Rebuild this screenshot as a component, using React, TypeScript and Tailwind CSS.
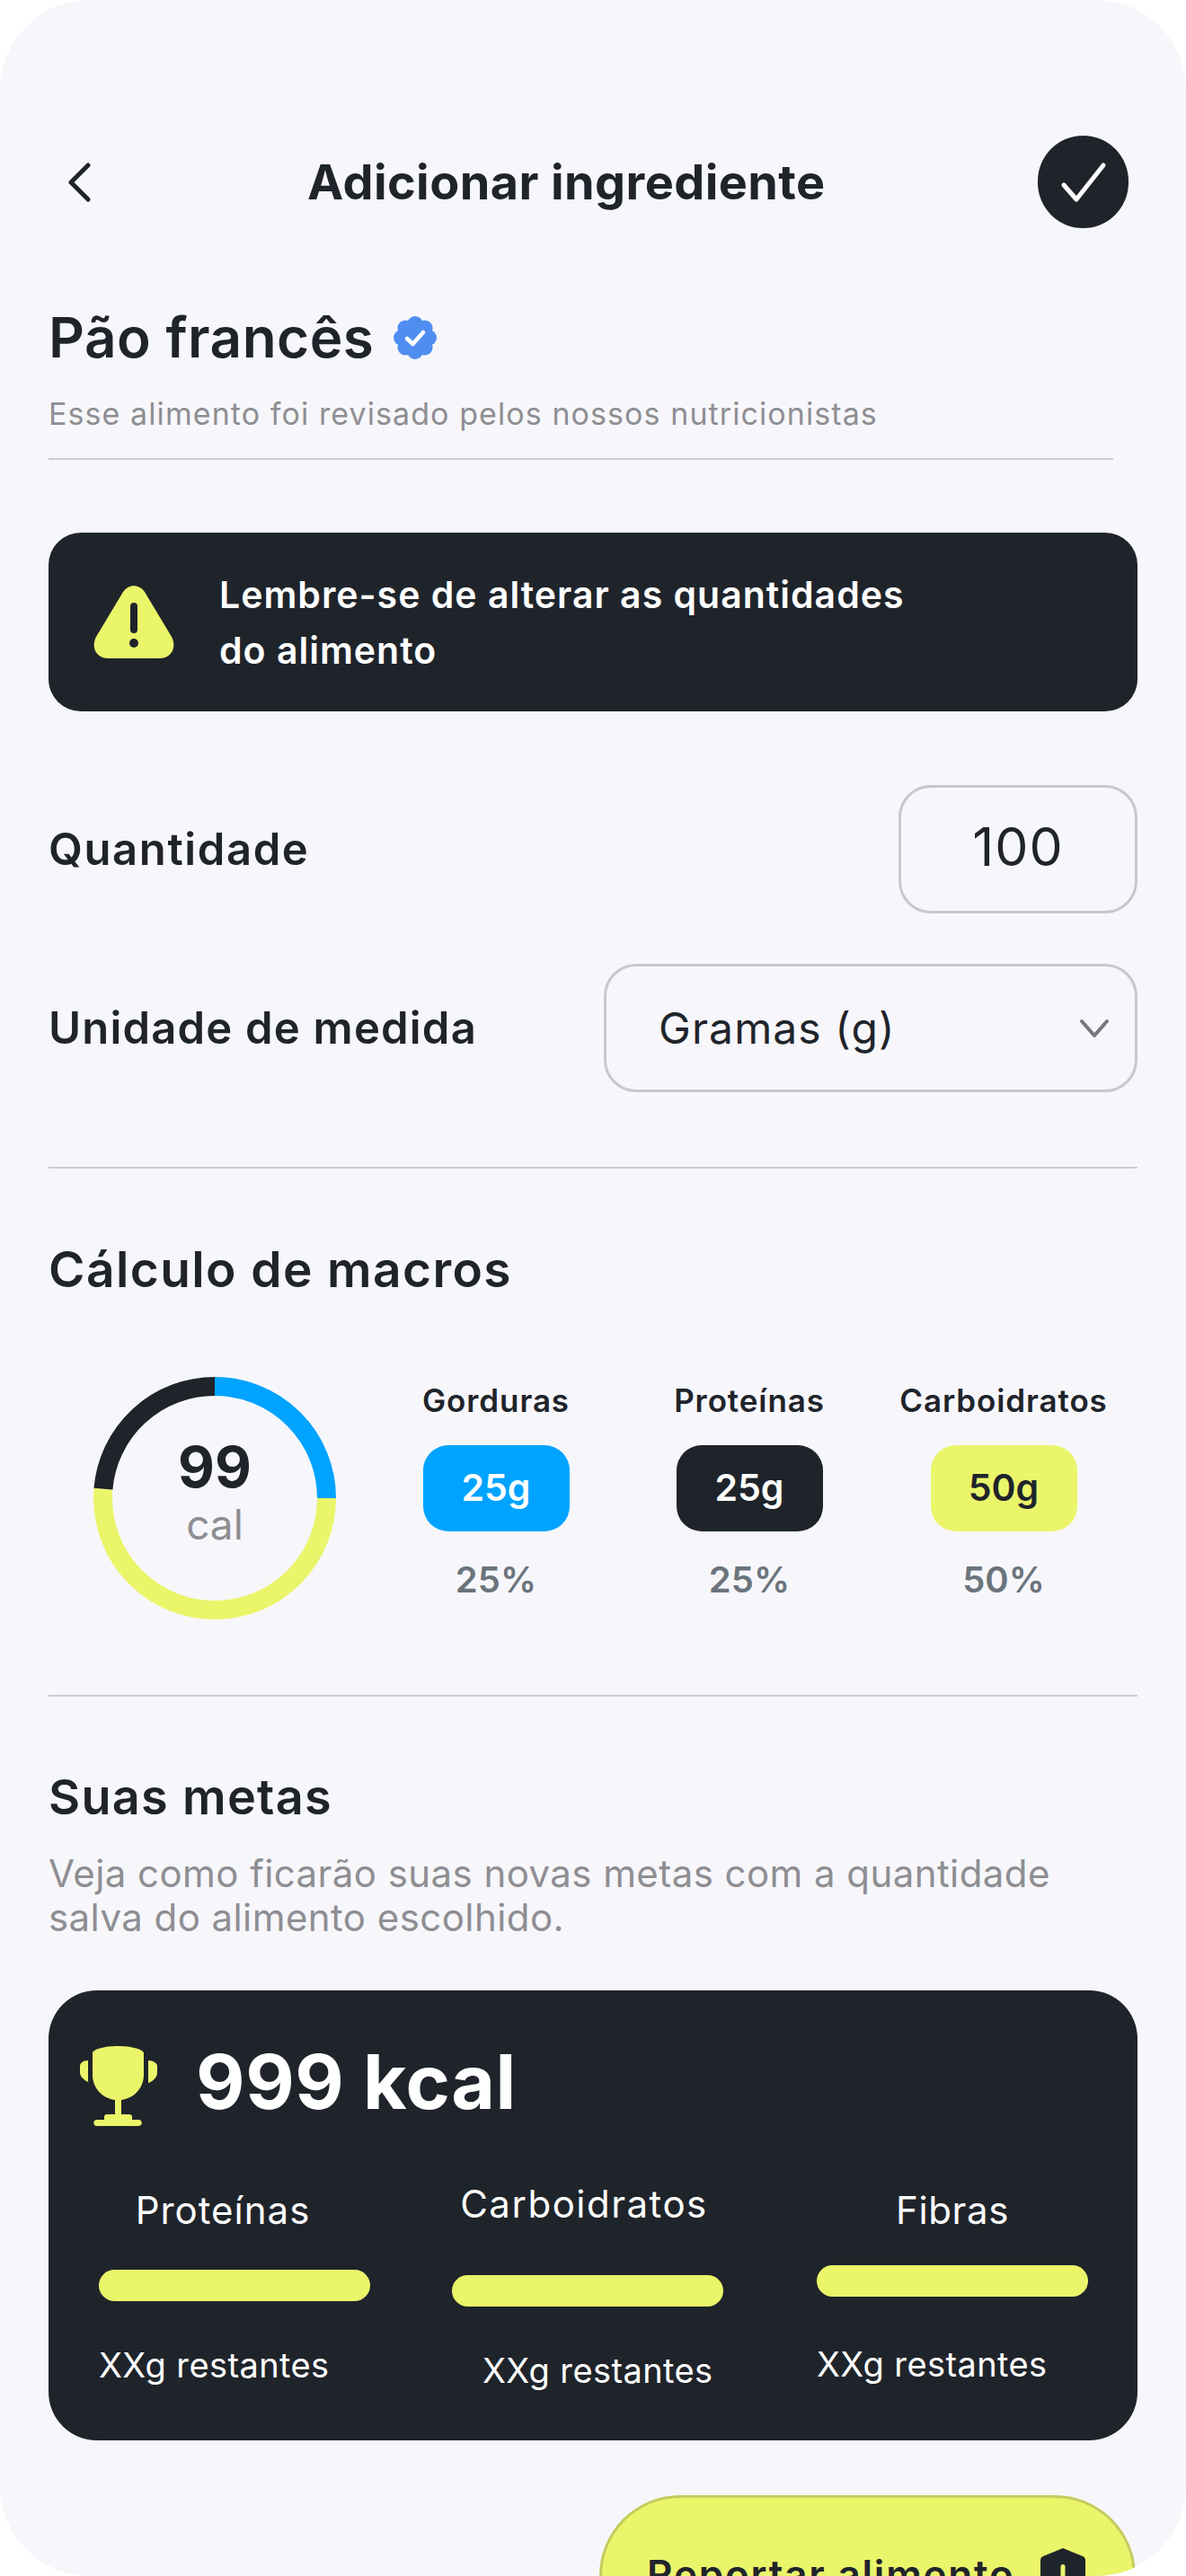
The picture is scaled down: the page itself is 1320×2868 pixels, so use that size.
const font = { fontFamily: "Inter, 'Noto Sans', sans-serif" };

const Divider = ({ className }: { className: string }) => (
  <div className={`h-[2px] bg-[#cbcbd0] ${className}`} />
);

const MacroCol = ({
  label,
  grams,
  percent,
  badge,
  className,
}: {
  label: string;
  grams: string;
  percent: string;
  badge: string;
  className: string;
}) => (
  <div className={`flex w-[232px] flex-col items-center ${className}`}>
    <span className="h-[54px] text-[35px] leading-[54px] font-semibold tracking-[0.9px] whitespace-nowrap text-[#1f242b]">
      {label}
    </span>
    <span
      className={`mt-[23px] flex h-[96px] w-[163px] items-center justify-center rounded-[28px] text-[41px] font-semibold ${badge}`}
    >
      {grams}
    </span>
    <span className="mt-[30px] text-[40px] leading-[48px] font-semibold text-[#6b747c]">
      {percent}
    </span>
  </div>
);

const MetaCol = ({
  label,
  labelClass,
  barClass,
  restClass,
  className,
}: {
  label: string;
  labelClass: string;
  barClass: string;
  restClass: string;
  className: string;
}) => (
  <div className={`flex w-[302px] flex-col ${className}`}>
    <span className={`text-center text-[42px] leading-[50px] text-white ${labelClass}`}>
      {label}
    </span>
    <div className={`h-[35px] w-[302px] rounded-full bg-[#ebf56a] ${barClass}`} />
    <span className={`text-[38px] leading-[46px] tracking-[0.4px] whitespace-nowrap text-white ${restClass}`}>
      XXg restantes
    </span>
  </div>
);

const App = () => {
  const r = 124.5;
  const c = 2 * Math.PI * r;
  return (
    <div className="h-[2868px] w-[1320px] bg-white" style={font}>
      <div className="h-[2868px] w-[1320px] overflow-hidden rounded-[100px] bg-[#f7f7fb] px-[54px] pt-[151px]">
        <div className="flex h-[103px] items-center">
          <svg className="ml-[20px] h-[44px] w-[28px]" viewBox="0 0 28 44" fill="none">
            <path d="M24 3 5 22l19 19" stroke="#1f242b" strokeWidth="5" strokeLinecap="round" strokeLinejoin="round" />
          </svg>
          <h1 className="ml-[240px] text-[54px] leading-[70px] font-bold tracking-[0.4px] whitespace-nowrap text-[#1f242b]">
            Adicionar ingrediente
          </h1>
          <div className="mr-[10px] ml-auto flex h-[103px] w-[101px] items-center justify-center rounded-full bg-[#1f242b]">
            <svg className="h-[50px] w-[56px]" viewBox="0 0 56 50" fill="none">
              <path d="M6 28 20 44 50 6" stroke="#fff" strokeWidth="5" strokeLinecap="round" strokeLinejoin="round" />
            </svg>
          </div>
        </div>

        <div className="mt-[87px] flex h-[70px] items-center">
          <h2 className="text-[62px] leading-[70px] font-semibold tracking-[0.5px] text-[#1f242b]">
            Pão francês
          </h2>
          <svg className="ml-[22px] h-[48px] w-[48px]" viewBox="0 0 48 48">
            <g fill="#4f8ef0">
              <circle cx="24" cy="24" r="18" />
              <circle cx="24" cy="9" r="9" />
              <circle cx="24" cy="39" r="9" />
              <circle cx="9" cy="24" r="9" />
              <circle cx="39" cy="24" r="9" />
              <circle cx="13.4" cy="13.4" r="9" />
              <circle cx="34.6" cy="13.4" r="9" />
              <circle cx="13.4" cy="34.6" r="9" />
              <circle cx="34.6" cy="34.6" r="9" />
            </g>
            <path d="M15 25l6.5 6L33 18" fill="none" stroke="#fff" strokeWidth="4.5" strokeLinecap="round" strokeLinejoin="round" />
          </svg>
        </div>
        <p className="mt-[30px] text-[34px] leading-[40px] tracking-[1.08px] text-[#8e8e93]">
          Esse alimento foi revisado pelos nossos nutricionistas
        </p>
        <Divider className="mt-[29px] w-[1185px]" />

        <div className="mt-[81px] flex h-[199px] items-center rounded-[36px] bg-[#1f242b] pl-[49px]">
          <svg className="h-[83px] w-[92px]" viewBox="0 0 92 83">
            <path
              d="M34 8C40-1 52-1 58 8L88 58C94 70 88 82 74 82H18C4 82-2 70 4 58Z"
              fill="#ebf56a"
            />
            <rect x="42" y="20" width="8" height="34" rx="4" fill="#1f242b" />
            <circle cx="46" cy="65" r="5" fill="#1f242b" />
          </svg>
          <p className="ml-[49px] text-[41px] leading-[62px] font-semibold tracking-[1px] text-white">
            Lembre-se de alterar as quantidades
            <br />
            do alimento
          </p>
        </div>

        <div className="mt-[82px] flex h-[143px] items-center justify-between">
          <span className="text-[49px] font-semibold tracking-[1.6px] text-[#1f242b]">Quantidade</span>
          <div className="flex h-[143px] w-[266px] items-center justify-center rounded-[36px] border-[3px] border-[#c8c8cc] pb-[4px] text-[59px] tracking-[1px] text-[#1f242b]">
            100
          </div>
        </div>
        <div className="mt-[56px] flex h-[143px] items-center justify-between">
          <span className="text-[49px] font-semibold tracking-[1.2px] text-[#1f242b]">Unidade de medida</span>
          <div className="flex h-[143px] w-[594px] items-center justify-between rounded-[36px] border-[3px] border-[#c8c8cc] pr-[28px] pl-[58px] text-[48px] tracking-[1.1px] text-[#1f242b]">
            Gramas (g)
            <svg className="h-[24px] w-[34px]" viewBox="0 0 34 24" fill="none">
              <path d="M3 4 17 20 31 4" stroke="#77777c" strokeWidth="4" strokeLinecap="round" strokeLinejoin="round" />
            </svg>
          </div>
        </div>
        <Divider className="mt-[83px] w-[1212px]" />

        <h3 className="mt-[77px] text-[55px] leading-[70px] font-semibold tracking-[1.4px] text-[#1f242b]">
          Cálculo de macros
        </h3>
        <div className="mt-[84px] flex h-[272px]">
          <div className="relative ml-[49px] h-[272px] w-[272px] shrink-0">
            <svg className="h-[272px] w-[272px] -rotate-90" viewBox="0 0 272 272" fill="none">
              <circle cx="136" cy="136" r={r} stroke="#00a3ff" strokeWidth="21" strokeDasharray={`${c * 0.25} ${c}`} />
              <circle cx="136" cy="136" r={r} stroke="#ebf56a" strokeWidth="21" strokeDasharray={`${c * 0.513} ${c}`} strokeDashoffset={-c * 0.25} />
              <circle cx="136" cy="136" r={r} stroke="#1f242b" strokeWidth="21" strokeDasharray={`${c * 0.237} ${c}`} strokeDashoffset={-c * 0.763} />
            </svg>
            <div className="absolute inset-0 flex flex-col items-center pt-[71px]">
              <span className="text-[63px] leading-[60px] font-bold text-[#1f242b]">99</span>
              <span className="mt-[6px] text-[46px] leading-[56px] text-[#8e8e93]">cal</span>
            </div>
          </div>
          <MacroCol label="Gorduras" grams="25g" percent="25%" badge="bg-[#00a3ff] text-white" className="ml-[61px]" />
          <MacroCol label="Proteínas" grams="25g" percent="25%" badge="bg-[#1f242b] text-white" className="ml-[50px]" />
          <MacroCol label="Carboidratos" grams="50g" percent="50%" badge="bg-[#ebf56a] text-[#1f242b]" className="ml-[51px]" />
        </div>
        <Divider className="mt-[83px] w-[1212px]" />

        <h3 className="mt-[77px] text-[54px] leading-[70px] font-semibold tracking-[1.3px] text-[#1f242b]">
          Suas metas
        </h3>
        <p className="mt-[25px] text-[42px] leading-[49px] tracking-[0.43px] text-[#8e8e93]">
          Veja como ficarão suas novas metas com a quantidade
          <br />
          salva do alimento escolhido.
        </p>

        <div className="mt-[57px] h-[501px] w-[1212px] rounded-[54px] bg-[#1f242b] pt-[62px]">
          <div className="flex h-[90px] items-center pl-[34px]">
            <svg className="h-[90px] w-[87px]" viewBox="0 0 87 90" fill="#ebf56a">
              <path d="M15 8C15 3 30 0 43 0S72 3 72 8V32C72 46 62 58 47 60V76H56C58 76 59 77 59 79V82H66C71 82 71 89 66 89H20C15 89 15 82 20 82H28V79C28 77 29 76 31 76H40V60C25 58 15 46 15 32Z" />
              <path d="M9 16V40L11 41C8 40 0 35 0 30V22C0 19 4 16 9 16Z" transform="translate(1 0)" />
              <path d="M77 16V41C81 40 87 35 87 30V22C87 19 82 16 77 16Z" />
            </svg>
            <span className="ml-[43px] pb-[10px] text-[84px] leading-[90px] font-bold tracking-[0.6px] text-white">
              999 kcal
            </span>
          </div>
          <div className="mt-[65px] flex pl-[56px]">
            <MetaCol
              label="Proteínas"
              labelClass="pr-[26px] tracking-[1px]"
              barClass="mt-[41px]"
              restClass="mt-[48px]"
              className="mt-[3px]"
            />
            <MetaCol
              label="Carboidratos"
              labelClass="pr-[8px] tracking-[1.5px]"
              barClass="mt-[54px]"
              restClass="mt-[48px] pl-[34px]"
              className="ml-[91px] mt-[-4px]"
            />
            <MetaCol
              label="Fibras"
              labelClass="tracking-[0.6px]"
              barClass="mt-[36px]"
              restClass="mt-[52px]"
              className="ml-[104px] mt-[3px]"
            />
          </div>
        </div>

        <div className="mt-[61px] ml-[613px] h-[200px] w-[597px] rounded-[90px] border-[3px] border-[#c5cc60] bg-[#ebf56a] pt-[58px] pl-[50px]">
          <div className="flex items-start">
            <span className="text-[44px] leading-[54px] font-semibold tracking-[1.8px] whitespace-nowrap text-[#1f242b]">
              Reportar alimento
            </span>
            <svg className="mt-[-2px] ml-[28px] h-[60px] w-[50px]" viewBox="0 0 50 60">
              <path d="M25 0 47 9C49 10 50 11 50 14V40C50 50 35 58 25 60 15 58 0 50 0 40V14C0 11 1 10 3 9Z" fill="#1f242b" />
              <rect x="22.5" y="18" width="5" height="20" rx="2.5" fill="#ebf56a" />
            </svg>
          </div>
        </div>
      </div>
    </div>
  );
};

export default App;
